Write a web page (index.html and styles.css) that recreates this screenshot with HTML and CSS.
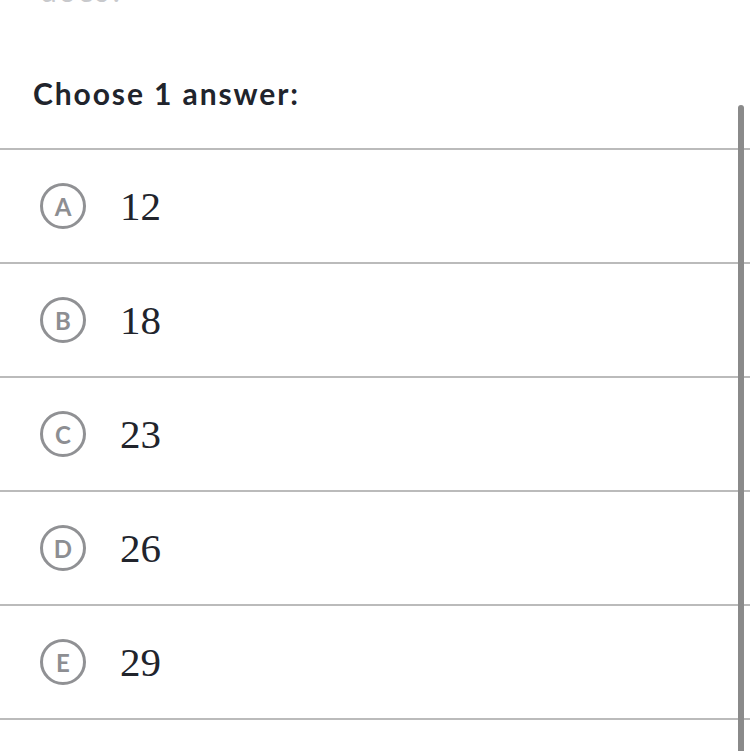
FILE: index.html
```html
<!DOCTYPE html>
<html>
<head>
<meta charset="utf-8">
<link rel="stylesheet" href="styles.css">
</head>
<body>
<div class="page">
  <div class="prompt">does?</div>
  <h2 class="heading">Choose 1 answer:</h2>
  <ul class="choices">
    <li class="choice"><span class="badge">A</span><span class="value">12</span></li>
    <li class="choice"><span class="badge">B</span><span class="value">18</span></li>
    <li class="choice"><span class="badge">C</span><span class="value">23</span></li>
    <li class="choice"><span class="badge">D</span><span class="value">26</span></li>
    <li class="choice"><span class="badge">E</span><span class="value">29</span></li>
  </ul>
  <div class="scrollbar"></div>
</div>
</body>
</html>
```
FILE: styles.css
```css
html, body {
  margin: 0;
  padding: 0;
  background: #ffffff;
  overflow: hidden;
}
.page {
  position: relative;
  width: 750px;
  height: 751px;
  overflow: hidden;
  font-family: Lato, "Noto Sans", sans-serif;
  color: #21242c;
}
.prompt {
  font-size: 30px;
  line-height: 36px;
  margin-top: -28px;
  padding-left: 40px;
  letter-spacing: 2px;
  color: #c8c9cc;
}
.heading {
  margin: 67px 0 37px 0;
  padding-left: 33px;
  font-size: 30px;
  line-height: 36px;
  font-weight: 700;
  letter-spacing: 1.9px;
  color: #21242c;
}
.choices {
  list-style: none;
  margin: 0;
  padding: 0;
}
.choice {
  display: flex;
  align-items: center;
  gap: 34px;
  height: 112px;
  padding-left: 40px;
  border-top: 2px solid #bbbbbb;
}
.choice:last-child {
  border-bottom: 2px solid #bbbbbb;
}
.badge {
  box-sizing: border-box;
  width: 46px;
  height: 46px;
  border: 3px solid #909194;
  border-radius: 50%;
  display: flex;
  align-items: center;
  justify-content: center;
  font-size: 24px;
  font-weight: 700;
  color: #8d8e92;
}
.value {
  font-family: "Liberation Serif", "Times New Roman", serif;
  font-size: 41px;
  color: #21242c;
  line-height: 1;
}
.scrollbar {
  position: absolute;
  left: 738px;
  top: 105px;
  width: 6px;
  height: 700px;
  border-radius: 3px;
  background: #8a8a8a;
}
```
